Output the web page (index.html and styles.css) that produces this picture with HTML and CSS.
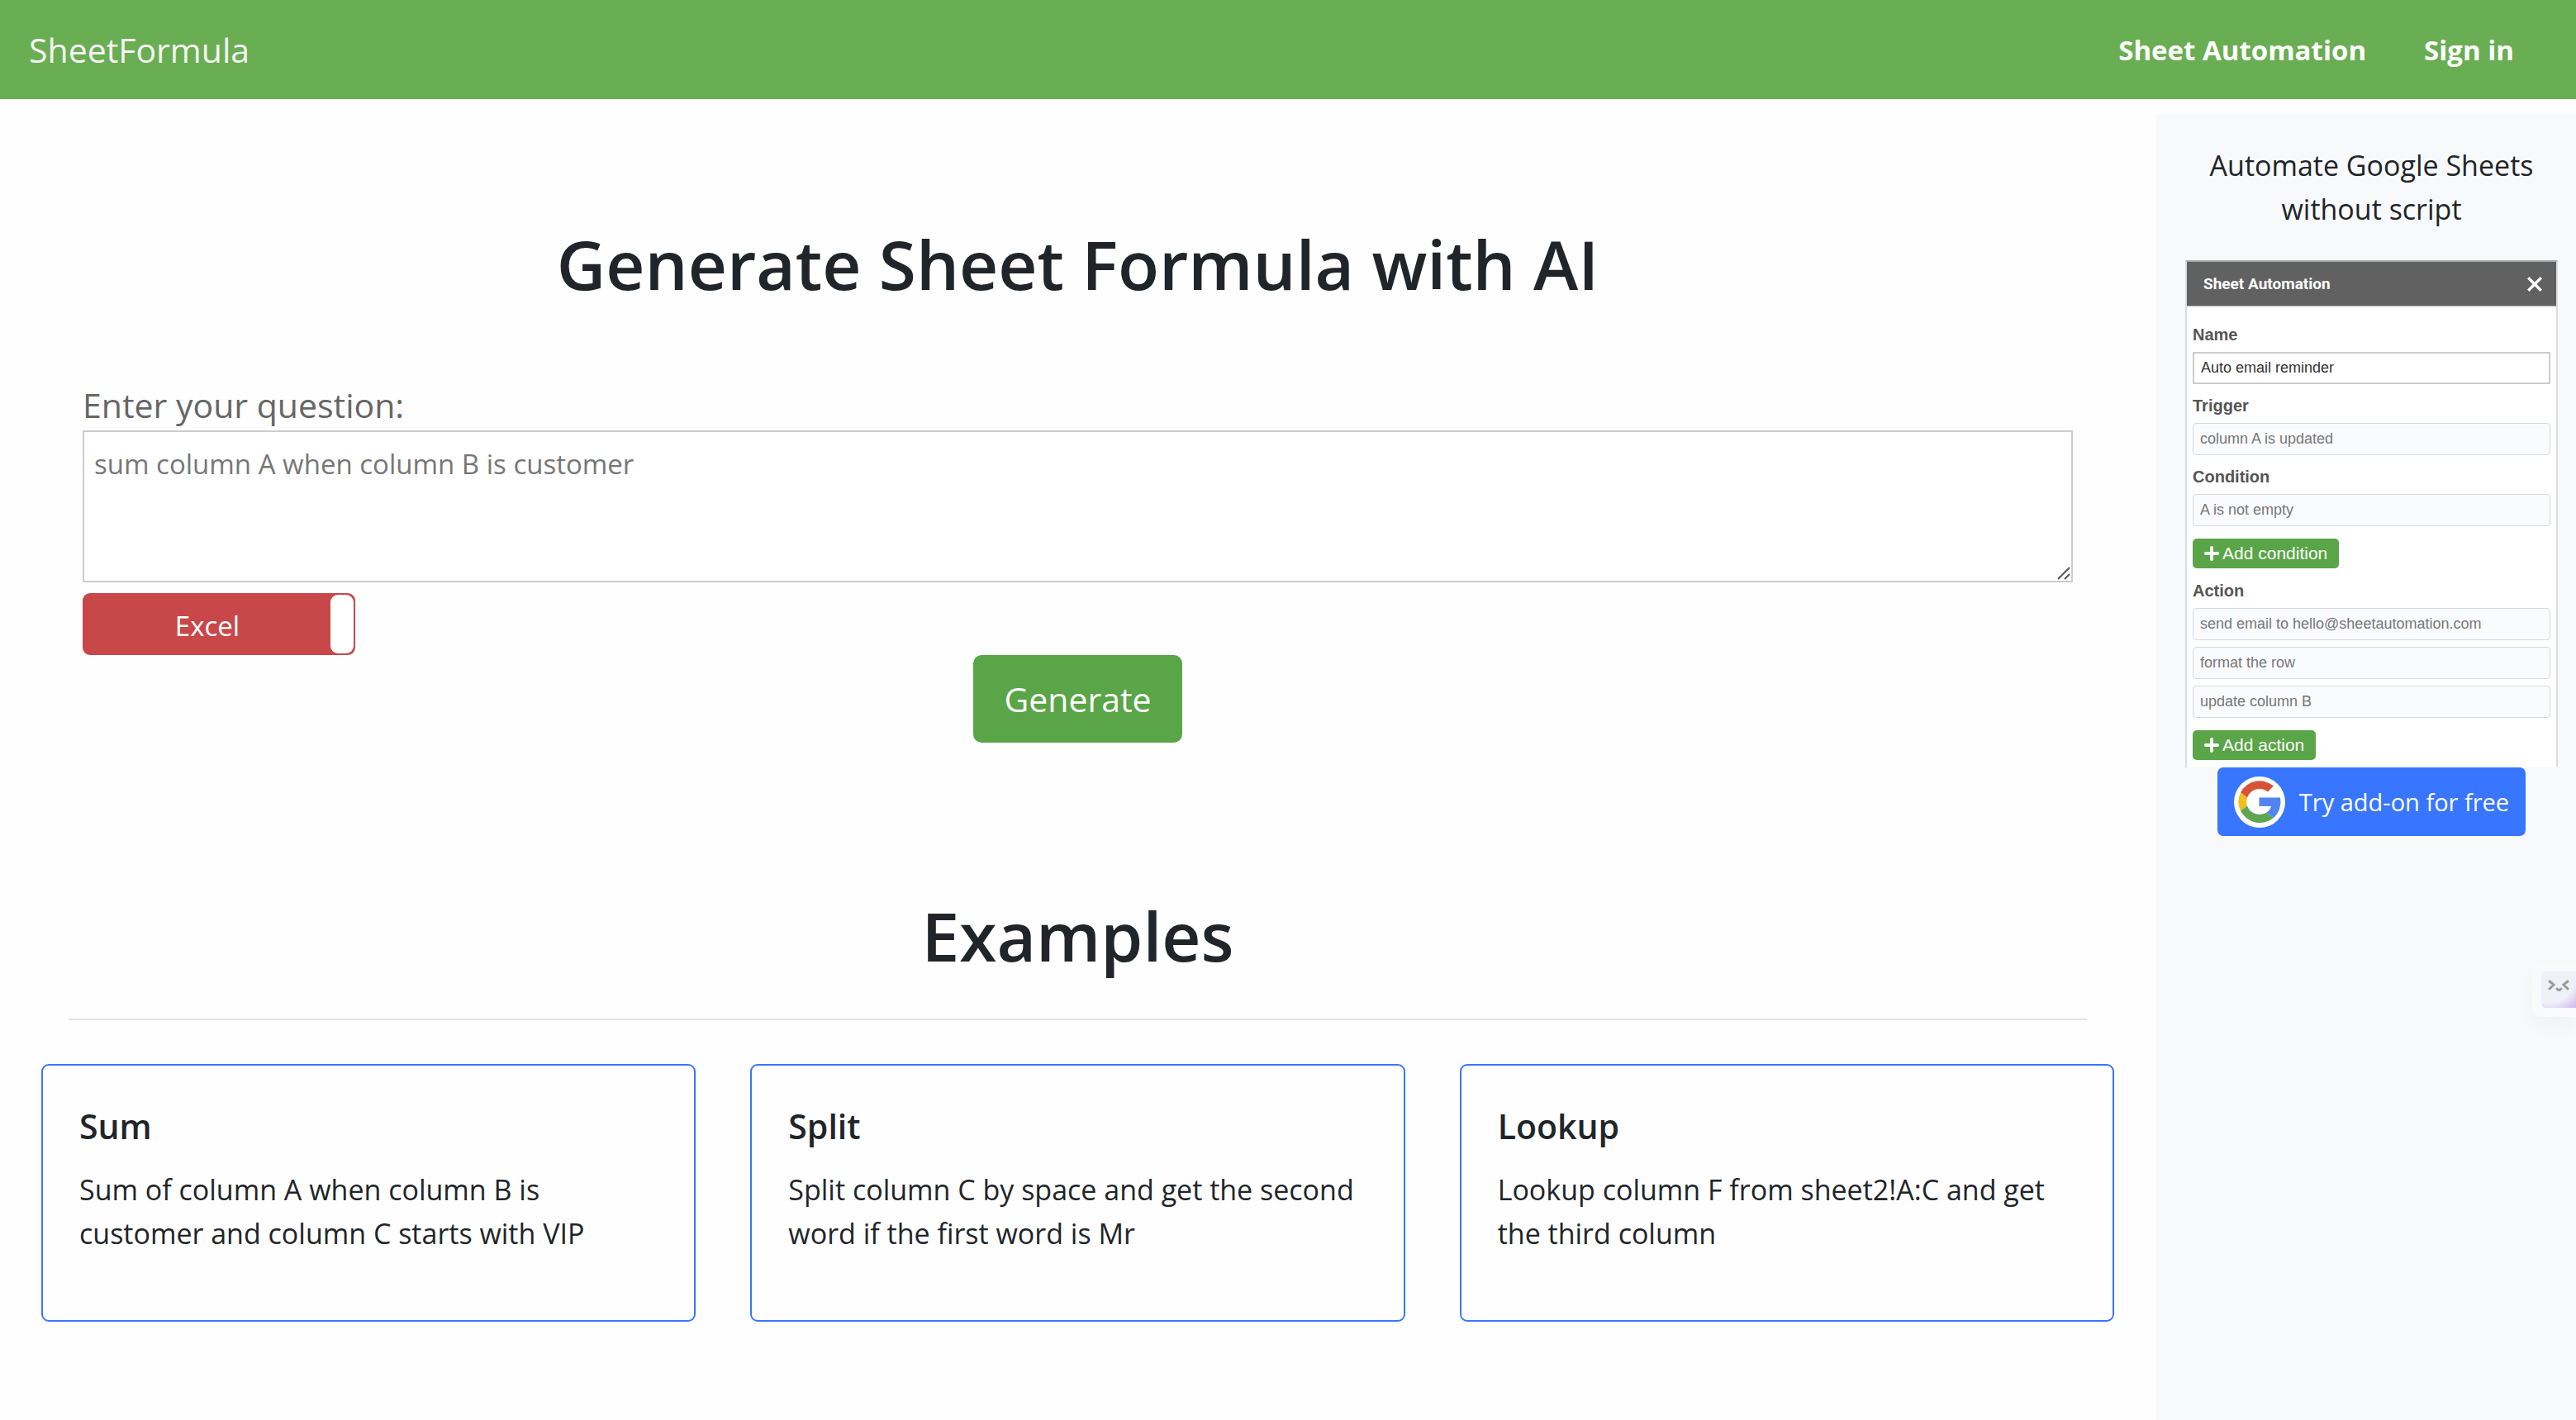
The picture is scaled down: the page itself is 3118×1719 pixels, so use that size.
FILE: index.html
```html
<!DOCTYPE html>
<html lang="en">
<head>
  <meta charset="UTF-8" />
  <meta name="viewport" content="width=device-width, initial-scale=1.0"/>
  <title>SheetFormula - Generate Sheet Formula with AI</title>
  <link rel="stylesheet" href="styles.css">
</head>
<body>

  <header>
    <a class="logo" href="#">SheetFormula</a>
    <nav class="nav-links">
      <a href="#automation">Sheet Automation</a>
      <a href="#signin">Sign in</a>
    </nav>
  </header>

  <div class="page">
    <main>
      <h1>Generate Sheet Formula with AI</h1>

      <form id="formulaForm" class="formula-form">
        <label class="question-label" for="question">Enter your question:</label>
        <div class="question-box">
          <textarea id="question" placeholder="sum column A when column B is customer"></textarea>
          <svg class="grip" viewBox="0 0 16 16" aria-hidden="true">
            <path d="M1 15L15 1M9 15l6-6" />
          </svg>
        </div>

        <label class="toggle">
          <input type="checkbox" id="sheetType" />
          <span class="toggle-text">Excel</span>
          <span class="toggle-handle"></span>
        </label>

        <button type="submit" class="generate-btn">Generate</button>
      </form>

      <section class="examples">
        <h2>Examples</h2>
        <hr>
        <div class="cards">
          <div class="card">
            <h3>Sum</h3>
            <p>Sum of column A when column B is customer and column C starts with VIP</p>
          </div>
          <div class="card">
            <h3>Split</h3>
            <p>Split column C by space and get the second word if the first word is Mr</p>
          </div>
          <div class="card">
            <h3>Lookup</h3>
            <p>Lookup column F from sheet2!A:C and get the third column</p>
          </div>
        </div>
      </section>
    </main>

    <aside id="automation">
      <p class="aside-text">Automate Google Sheets without script</p>

      <div class="addon">
        <div class="addon-header">
          <span>Sheet Automation</span>
          <button type="button" class="close-btn" aria-label="Close">
            <svg viewBox="0 0 18 18"><path d="M2 2l14 14M16 2L2 16" /></svg>
          </button>
        </div>
        <div class="addon-body">
          <label for="ruleName">Name</label>
          <input type="text" id="ruleName" class="rule-name" value="Auto email reminder" />

          <label for="trigger">Trigger</label>
          <input type="text" id="trigger" value="column A is updated" readonly />

          <label for="condition">Condition</label>
          <input type="text" id="condition" value="A is not empty" readonly />
          <button type="button" class="add-btn">
            <svg viewBox="0 0 18 18" aria-hidden="true"><path d="M9 2v14M2 9h14" /></svg>
            Add condition
          </button>

          <label for="action">Action</label>
          <input type="text" id="action" value="send email to hello@sheetautomation.com" readonly />
          <input type="text" value="format the row" aria-label="Action 2" readonly />
          <input type="text" value="update column B" aria-label="Action 3" readonly />
          <button type="button" class="add-btn">
            <svg viewBox="0 0 18 18" aria-hidden="true"><path d="M9 2v14M2 9h14" /></svg>
            Add action
          </button>
        </div>
      </div>

      <a class="try-btn" href="#addon">
        <svg viewBox="0 0 62 62" aria-hidden="true">
          <circle cx="31" cy="31" r="31" fill="#fff" />
          <path d="M48 11.500A26 26 0 0 0 8 19.500L16 25.500A16 16 0 0 1 41 18.500Z" fill="#d6533a" />
          <path d="M8 19.500A26 26 0 0 0 8 41.500L16 35.500A16 16 0 0 1 16 25.500Z" fill="#f0c01f" />
          <path d="M8 41.500A26 26 0 0 0 48 50L39.500 43.500A16 16 0 0 1 16 35.500Z" fill="#5ea652" />
          <path d="M30.500 25.500H56A26 26 0 0 1 48 50L39.500 43.500Q44 40.500 45 36H30.500Z" fill="#5383f1" />
        </svg>
        Try add-on for free
      </a>
    </aside>
  </div>

  <button type="button" class="helper" aria-label="Open helper">
    <span class="helper-face">
      <svg viewBox="0 0 26 14"><path d="M2 2l5 4-5 5M24 2l-5 4 5 5M11 11q2 3 5 0" /></svg>
    </span>
  </button>

  <script>
    document.getElementById("formulaForm").addEventListener("submit", function (e) {
      e.preventDefault();
    });
  </script>

</body>
</html>
```
FILE: styles.css
```css
* {
  box-sizing: border-box;
}

body {
  margin: 0;
  min-height: 100vh;
  display: flex;
  flex-direction: column;
  font-family: "Open Sans", "Noto Sans", sans-serif;
  font-size: 34px;
  line-height: 53px;
  color: #212529;
  background-color: #fefefe;
}

h1, h2, h3, p {
  margin: 0;
}

button, input, textarea {
  font-family: inherit;
}

a {
  text-decoration: none;
}

header {
  height: 120px;
  padding: 0 75px 0 35px;
  display: flex;
  justify-content: space-between;
  align-items: center;
  background-color: #6aae53;
}

.logo {
  font-size: 41px;
  color: #f4f4f4;
}

.nav-links {
  display: flex;
  gap: 70px;
}

.nav-links a {
  font-size: 33px;
  font-weight: bold;
  color: white;
}

.page {
  flex: 1;
  display: flex;
  padding-top: 18px;
}

main {
  flex: 1;
  padding: 128px 50px 0;
}

h1, h2 {
  font-size: 82px;
  font-weight: 600;
  line-height: 106px;
  text-align: center;
}

.formula-form {
  margin: 87px 50px 0;
  display: flex;
  flex-direction: column;
  align-items: flex-start;
}

.question-label {
  font-size: 41px;
  line-height: 62px;
  color: #666;
}

.question-box {
  position: relative;
  width: 100%;
  height: 184px;
}

.question-box textarea {
  display: block;
  width: 100%;
  height: 184px;
  padding: 12px;
  border: 2px solid #ccc;
  font-size: 33px;
  line-height: 53px;
  background-color: white;
  resize: vertical;
  outline: none;
}

.question-box textarea::placeholder {
  color: #777;
}

.question-box textarea::-webkit-resizer {
  background: none;
}

.grip {
  position: absolute;
  right: 3px;
  bottom: 3px;
  width: 16px;
  fill: none;
  stroke: #555;
  stroke-width: 2;
  pointer-events: none;
}

.toggle {
  position: relative;
  width: 330px;
  height: 75px;
  margin-top: 13px;
  padding: 2px;
  display: flex;
  border-radius: 9px;
  background-color: #c84849;
  color: white;
  cursor: pointer;
}

.toggle input {
  position: absolute;
  inset: 0;
  margin: 0;
  opacity: 0;
}

.toggle-text {
  flex: 1;
  text-align: center;
  font-size: 33px;
  line-height: 75px;
}

.toggle-handle {
  width: 28px;
  border-radius: 9px;
  background-color: white;
}

.generate-btn {
  align-self: center;
  height: 106px;
  padding: 0 37px;
  border: none;
  border-radius: 10px;
  font-size: 41px;
  color: white;
  background-color: #59a547;
  cursor: pointer;
}

.examples {
  padding-top: 180px;
}

.examples hr {
  margin: 48px 33px 53px;
  border: none;
  border-top: 2px solid #e5e5e5;
}

.cards {
  display: grid;
  grid-template-columns: repeat(3, 1fr);
  gap: 66px;
}

.card {
  height: 312px;
  padding: 44px;
  border: 2px solid #3976ff;
  border-radius: 9px;
}

.card h3 {
  margin-bottom: 22px;
  font-size: 41px;
  font-weight: 600;
  line-height: 58px;
}

aside {
  width: 509px;
  padding: 36px 22px 0 36px;
  display: flex;
  flex-direction: column;
  align-items: center;
  background-color: #f8f9fb;
}

.aside-text {
  padding: 0 20px;
  text-align: center;
}

/* add-on preview */
.addon {
  width: 100%;
  height: 614px;
  margin-top: 35px;
  border: 2px solid #ddd;
  border-top-color: #aaa;
  border-bottom: none;
  font-family: "Liberation Sans", Arial, sans-serif;
  background-color: white;
}

.addon-header {
  height: 54px;
  padding: 0 16px 0 20px;
  display: flex;
  justify-content: space-between;
  align-items: center;
  border-bottom: 1px solid #aaa;
  font-family: Roboto, sans-serif;
  font-size: 19px;
  font-weight: bold;
  color: white;
  background-color: #616161;
}

.close-btn {
  display: flex;
  padding: 0;
  border: none;
  background: none;
}

.close-btn svg {
  width: 20px;
  stroke: white;
  stroke-width: 3;
}

.addon-body {
  padding: 19px 7px 0;
  display: flex;
  flex-direction: column;
  align-items: flex-start;
}

.addon-body label {
  margin-bottom: 6px;
  font-size: 20px;
  font-weight: bold;
  line-height: 30px;
  color: #555;
}

.addon-body input {
  width: 100%;
  height: 39px;
  margin-bottom: 8px;
  padding: 0 8px;
  border: 1px solid #d8d8d8;
  border-radius: 4px;
  font-size: 18px;
  color: #777;
  background-color: #fafbfd;
}

.addon-body input + label {
  margin-top: 3px;
}

.addon-body .rule-name {
  border: 2px solid #ccc;
  border-radius: 0;
  color: #333;
  background-color: white;
}

.add-btn {
  height: 36px;
  margin: 7px 0 12px;
  padding: 0 14px;
  display: flex;
  align-items: center;
  gap: 4px;
  border: none;
  border-radius: 5px;
  font-size: 21px;
  color: white;
  background-color: #59a547;
}

.add-btn svg {
  width: 18px;
  stroke: white;
  stroke-width: 4;
  stroke-linecap: round;
}

.try-btn {
  height: 83px;
  padding: 0 20px;
  display: flex;
  align-items: center;
  gap: 17px;
  border-radius: 7px;
  font-size: 29px;
  color: white;
  background-color: #3976ff;
}

.try-btn svg {
  width: 62px;
}

/* floating helper on the window edge */
.helper {
  position: fixed;
  right: 0;
  top: 1165px;
  width: 53px;
  height: 66px;
  padding: 11px 0 11px 11px;
  border: none;
  border-radius: 9px 0 0 9px;
  background-color: #f9fafc;
  box-shadow: 0 12px 26px rgba(0,0,0,0.03);
}

.helper-face {
  display: block;
  height: 44px;
  padding: 10px 8px;
  border-radius: 5px 0 0 5px;
  background: radial-gradient(circle at 20% 10%, #f0f0f7 65%, #cdb4f0);
}

.helper-face svg {
  display: block;
  width: 26px;
  fill: none;
  stroke: #999;
  stroke-width: 3;
  stroke-linecap: round;
}

@media (max-width: 1400px) {
  .page {
    flex-direction: column;
  }

  .cards {
    grid-template-columns: 1fr;
  }

  aside {
    width: 100%;
  }

  .addon {
    max-width: 450px;
  }
}
```
